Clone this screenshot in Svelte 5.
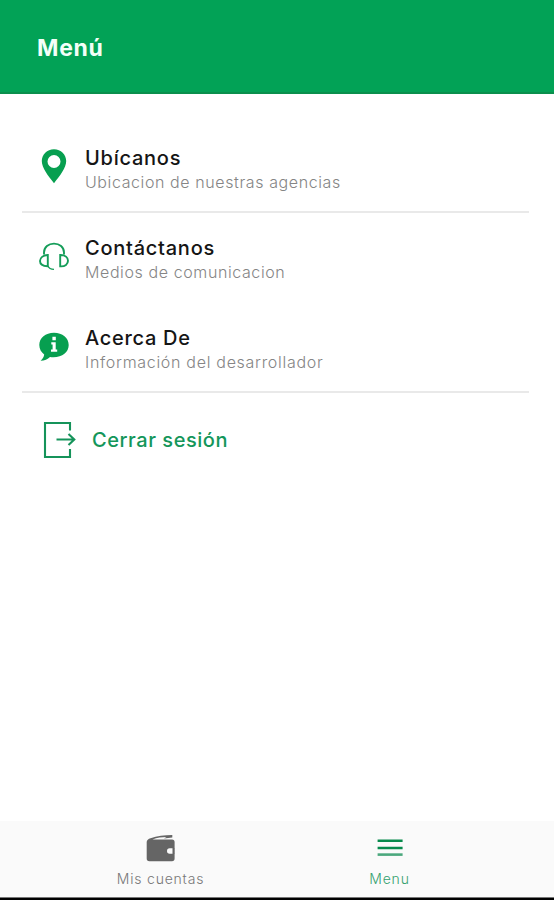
<script>
  const items = [
    { icon: 'pin', title: 'Ubícanos', text: 'Ubicacion de nuestras agencias', line: true },
    { icon: 'headset', title: 'Contáctanos', text: 'Medios de comunicacion', line: false },
    { icon: 'info', title: 'Acerca De', text: 'Información del desarrollador', line: true }
  ];
</script>

<div class="screen">
  <header><h1>Menú</h1></header>

  <main>
    {#each items as item}
      <section class="row {item.icon}" class:line={item.line}>
        <div class="icon">
          {#if item.icon === 'pin'}
            <svg width="32" height="40" viewBox="0 0 32 40">
              <path fill="#079f50" fill-rule="evenodd" d="M16 3.2C9 3.2 3.8 8.3 3.8 15.1C3.8 21.5 10 30 16 37.2C22 30 28.2 21.5 28.2 15.1C28.2 8.3 23 3.2 16 3.2ZM16 9a6.5 6.5 0 1 1 0 13a6.5 6.5 0 0 1 0-13Z" />
            </svg>
          {:else if item.icon === 'headset'}
            <svg width="32" height="40" viewBox="0 0 32 40" fill="none" stroke="#159d59" stroke-width="1.9">
              <path d="M6 18.5V16.5C6 11 10.5 7.6 16 7.6S26 11 26 16.5V18.5" />
              <path d="M9.8 19C5 19.2 2 21.8 2 25S5 30 9.8 30.3Z" />
              <path d="M22.2 19V30.3C27.2 30.7 30 28 30 24.8S27.3 18.8 22.2 19Z" />
              <path d="M10 30C10.8 32.3 12.5 33.3 16 33.4" stroke-width="1.3" />
            </svg>
          {:else}
            <svg width="32" height="40" viewBox="0 0 32 40">
              <path fill="#079f50" d="M16 6.8C7.5 6.8 1.3 12 1.3 19C1.3 23 3.2 26.3 6.2 28.4C5.9 30.6 4.8 32.8 2.6 34.8C6.6 34.6 9.7 33.4 12 31C22.9 32.4 30.7 27 30.7 19C30.7 12 24.5 6.8 16 6.8Z" />
              <path fill="#fff" d="M14.4 10.8h3.4v3.4h-3.4ZM13.3 16.3h4.4v7.3h1.5v2.2H13v-2.2h1.6v-5.2h-1.3Z" />
            </svg>
          {/if}
        </div>
        <div class="copy">
          <h2>{item.title}</h2>
          <p>{item.text}</p>
        </div>
      </section>
    {/each}

    <div class="logout">
      <svg width="36" height="40" viewBox="0 0 36 40" fill="none" stroke="#15935a" stroke-width="2.1">
        <path d="M28 10.5V3H3V37H28V29M14.5 19.5H32M26.5 14L32.3 19.5L26.5 25" />
      </svg>
      <span>Cerrar sesión</span>
    </div>
  </main>

  <nav>
    <div class="tab">
      <svg width="30" height="30" viewBox="0 0 30 30">
        <path fill="#656565" d="M4.5 5.3C11 2.9 18.5 2 26.3 2V4.6L18 5.5L20.5 4.1C16 4.2 11 4.8 6.5 6.5H26C27.8 6.5 28.6 7.4 28.6 8.9V25.6C28.6 27.6 27.7 28.2 26 28.2H3.5C1.5 28.2.7 27.1.7 25.4V9C.7 7.2 2.4 6 4.5 5.3Z" />
        <path fill="#fafafa" d="M23.7 15.3h4.9v5.4h-4.9a2.7 2.7 0 0 1 0-5.4Z" />
        <path fill="#656565" d="M26.5 15h2.1v6h-2.1Z" />
      </svg>
      <span>Mis cuentas</span>
    </div>
    <div class="tab active">
      <svg width="30" height="30" viewBox="0 0 30 30">
        <path d="M2.6 6.5h25v2.5h-25ZM2.6 13.8h25v2.5h-25Z" fill="#078a4c" />
        <path d="M2.6 20.3h25v2.6h-25Z" fill="#4ba87d" />
      </svg>
      <span>Menu</span>
    </div>
  </nav>
</div>

<style>
  :global(body) { background: #fff; }
  .screen {
    width: 100%;
    height: 900px;
    display: flex;
    flex-direction: column;
    background: #fff;
    font-family: Inter, "Liberation Sans", sans-serif;
    overflow: hidden;
  }
  h1, h2, p { margin: 0; white-space: nowrap; }
  header {
    box-sizing: border-box;
    height: 94px;
    flex: none;
    padding: 33px 0 0 37px;
    background: #02a256;
    border-bottom: 2px solid #0b8f4d;
  }
  h1 {
    font-size: 23px;
    line-height: 30px;
    font-weight: 700;
    letter-spacing: 0.7px;
    color: #f3fff8;
  }
  main { flex: 1; padding: 29px 25px 0 22px; }
  .row {
    box-sizing: border-box;
    height: 90px;
    display: flex;
    border-bottom: 2px solid transparent;
  }
  .row.line { border-bottom-color: #e9e9e9; }
  .icon { width: 32px; margin: 23px 15px 0 16px; }
  svg { display: block; flex: none; }
  .copy { padding-top: 22px; }
  h2 {
    font-size: 20px;
    line-height: 26px;
    font-weight: 500;
    letter-spacing: 0.75px;
    color: #151515;
  }
  p {
    font-size: 16px;
    line-height: 22px;
    font-weight: 300;
    letter-spacing: 0.6px;
    color: #858585;
  }
  .info h2 { letter-spacing: 0.7px; }
  .info p { letter-spacing: 0.7px; }
  .logout {
    display: flex;
    align-items: center;
    gap: 14px;
    padding: 27px 0 0 20px;
    font-size: 20px;
    font-weight: 500;
    letter-spacing: 0.55px;
    color: #14965a;
  }
  nav {
    box-sizing: border-box;
    height: 79px;
    flex: none;
    display: flex;
    background: #fafafa;
    border-bottom: 2px solid #000;
    box-shadow: inset 0 -1px #777;
    padding: 12px 0 0 46px;
  }
  .tab {
    width: 229px;
    display: flex;
    flex-direction: column;
    align-items: center;
    font-size: 14px;
    line-height: 18px;
    font-weight: 300;
    letter-spacing: 0.8px;
    color: #777;
  }
  .tab span { margin-top: 7px; }
  .tab.active { color: #35a16f; }
</style>
